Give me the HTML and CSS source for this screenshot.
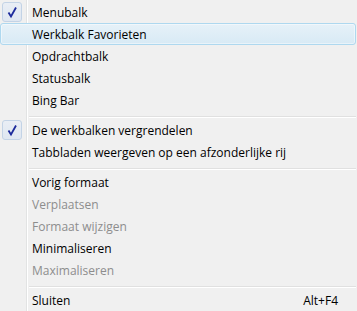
FILE: index.html
```html
<!DOCTYPE html>
<html>
<head>
<meta charset="utf-8">
<link rel="stylesheet" href="styles.css">
</head>
<body>
<div class="menu">
  <div class="item checked"><span class="gut"><span class="check"><svg width="20" height="20" viewBox="0 0 20 20"><path d="M6.5 10.5 L9 14.5 L14 5.5" fill="none" stroke="#1d2b9c" stroke-width="1.8" stroke-linejoin="miter" stroke-linecap="butt"/></svg></span></span><span class="label">Menubalk</span></div>
  <div class="item hover"><span class="gut"></span><span class="label">Werkbalk Favorieten</span></div>
  <div class="item"><span class="gut"></span><span class="label">Opdrachtbalk</span></div>
  <div class="item"><span class="gut"></span><span class="label">Statusbalk</span></div>
  <div class="item"><span class="gut"></span><span class="label">Bing Bar</span></div>
  <div class="sep"></div>
  <div class="item checked"><span class="gut"><span class="check"><svg width="20" height="20" viewBox="0 0 20 20"><path d="M6.5 10.5 L9 14.5 L14 5.5" fill="none" stroke="#1d2b9c" stroke-width="1.8" stroke-linejoin="miter" stroke-linecap="butt"/></svg></span></span><span class="label">De werkbalken vergrendelen</span></div>
  <div class="item"><span class="gut"></span><span class="label">Tabbladen weergeven op een afzonderlijke rij</span></div>
  <div class="sep"></div>
  <div class="item"><span class="gut"></span><span class="label">Vorig formaat</span></div>
  <div class="item disabled"><span class="gut"></span><span class="label">Verplaatsen</span></div>
  <div class="item disabled"><span class="gut"></span><span class="label">Formaat wijzigen</span></div>
  <div class="item"><span class="gut"></span><span class="label">Minimaliseren</span></div>
  <div class="item disabled"><span class="gut"></span><span class="label">Maximaliseren</span></div>
  <div class="sep"></div>
  <div class="item"><span class="gut"></span><span class="label">Sluiten</span><span class="accel">Alt+F4</span></div>
</div>
</body>
</html>
```
FILE: styles.css
```css
html, body {
  margin: 0;
  padding: 0;
  background: #f0f0f0;
}
body {
  width: 357px;
  height: 311px;
  overflow: hidden;
}
.menu {
  width: 356px;
  padding-top: 1px;
  font-family: "Open Sans", "Noto Sans", sans-serif;
  font-size: 12px;
  color: #000;
  background: linear-gradient(to right, #f0f0f0 26px, #e2e3e3 26px, #e2e3e3 27px, #ffffff 27px, #ffffff 28px, #f0f0f0 28px);
  min-height: 310px;
}
.item {
  height: 22px;
  display: flex;
  align-items: center;
  box-sizing: border-box;
}
.gut {
  width: 32px;
  flex: none;
  height: 22px;
  display: flex;
  align-items: center;
}
.check {
  margin-left: 2px;
  width: 20px;
  height: 20px;
  box-sizing: border-box;
  border: 1px solid #c3d3e6;
  border-radius: 3px;
  background: linear-gradient(#e9eef5, #dfe7f1);
  display: flex;
  align-items: center;
  justify-content: center;
}
.check svg {
  display: block;
  margin: -1px;
}
.label {
  flex: 1;
  white-space: nowrap;
}
.accel {
  padding-right: 18px;
}
.hover {
  border: 1px solid #aed8ef;
  border-radius: 3px;
  background: linear-gradient(#e6f1f8, #d8eaf5);
  box-shadow: inset 0 0 0 1px rgba(255,255,255,0.45);
}
.hover .gut {
  width: 31px;
  height: 20px;
}
.disabled {
  color: #8d8d8d;
}
.sep {
  height: 8px;
  box-sizing: border-box;
  padding-top: 5px;
  margin-left: 29px;
}
.sep::before {
  content: "";
  display: block;
  height: 1px;
  background: #e0e0e0;
  border-bottom: 1px solid #ffffff;
}
```
